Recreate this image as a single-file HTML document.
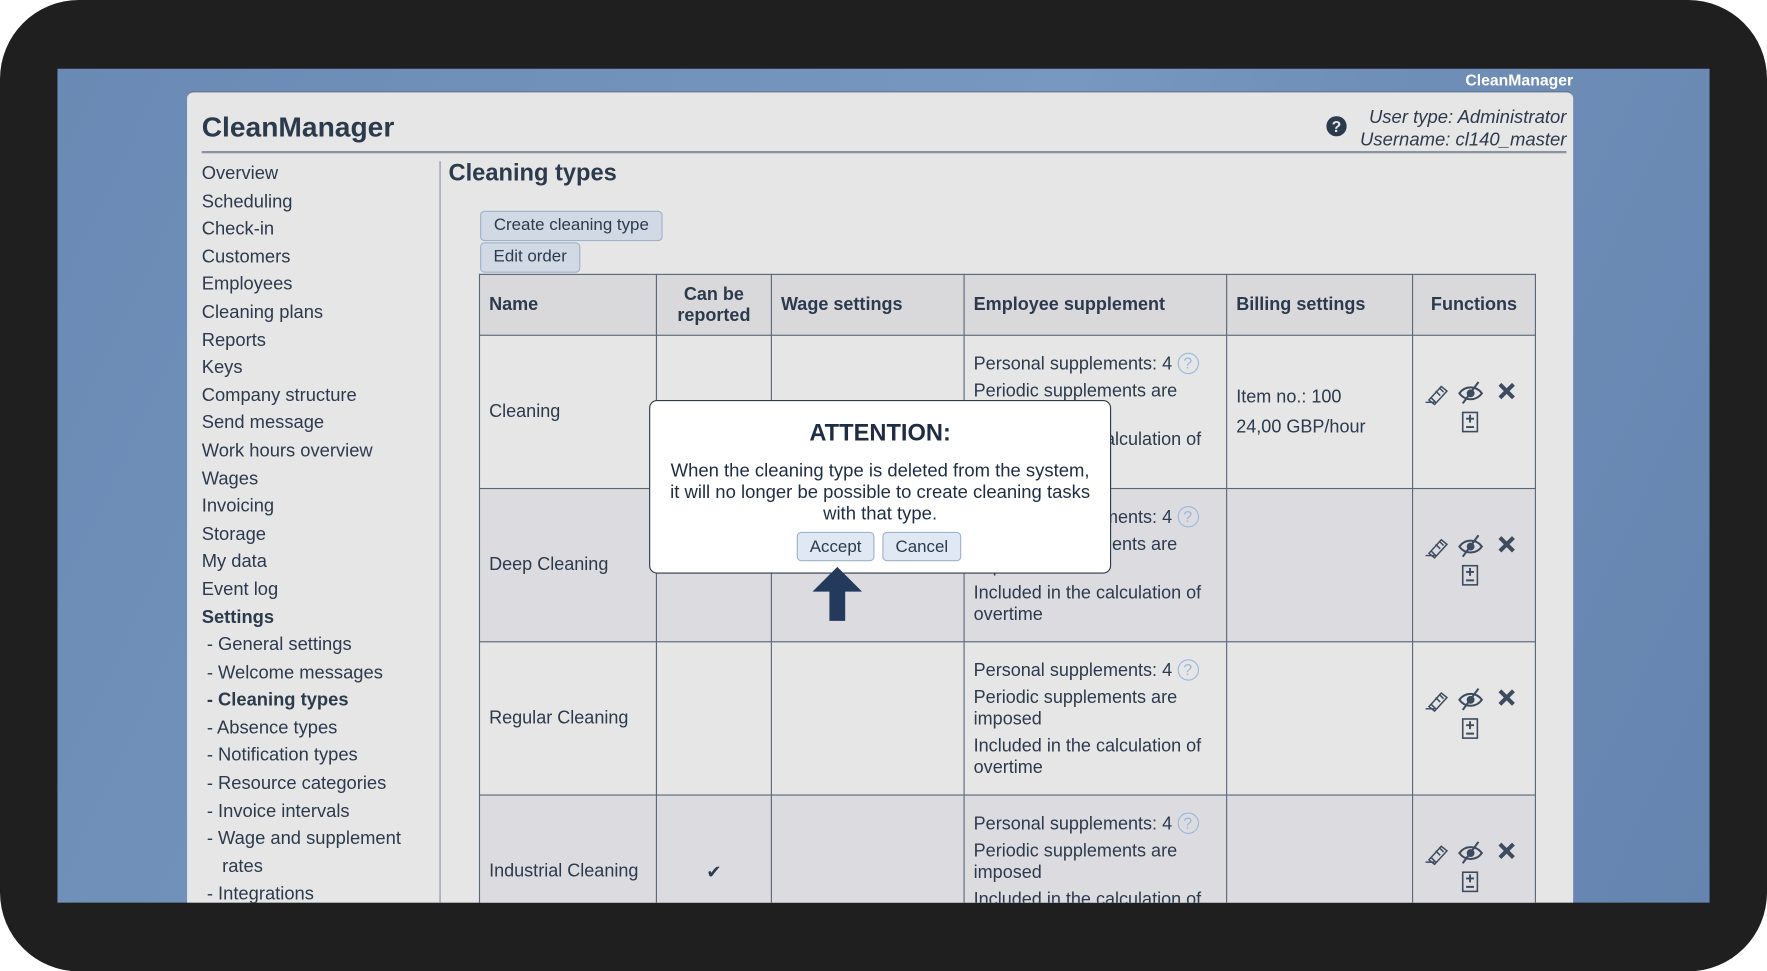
<!DOCTYPE html>
<html><head><meta charset="utf-8"><style>
*{margin:0;padding:0;box-sizing:border-box}
html,body{width:1767px;height:971px;overflow:hidden;background:#fff;font-family:"Liberation Sans",sans-serif}
#w{position:absolute;left:0;top:0;width:1568px;height:862px;transform:scale(1.12691);transform-origin:0 0}
.frame{position:absolute;left:0;top:0;width:1568px;height:862px;background:#201f20;border-radius:70px}
.screen{position:absolute;left:51px;top:61px;width:1466px;height:740px;background:linear-gradient(115deg,#6a89b4 0%,#7898c0 50%,#6f8eb8 65%,#6585b0 100%);overflow:hidden}
.brand{position:absolute;right:121px;top:2px;color:#fff;font-weight:bold;font-size:14px}
.panel{position:absolute;left:115px;top:20px;width:1230px;height:740px;background:#e6e6e6;border-radius:6px 6px 0 0;border-top:1px solid #5d6b80;color:#2c3a4d}
.t{position:absolute;white-space:nowrap}
.nav div{height:24.6px;font-size:16.3px;line-height:24.6px}
table{position:absolute;left:259px;top:161px;border-collapse:collapse;font-size:16px;color:#2c3a4d}
td,th{border:1px solid #5a677a;vertical-align:middle;padding:0 8px;text-align:left}
th{background:#d9d9dc;height:54px;font-weight:bold}
tr.a td{background:#e6e6e6}tr.b td{background:#dcdce0}
td{height:136px}
.btn{position:absolute;background:#d0d9e4;border:1px solid #9fb2c9;border-radius:4px;font-size:15px;color:#2c3a4d;text-align:center;line-height:24px}
.q{display:inline-block;width:19px;height:19px;border:1.5px solid #9ab8dc;border-radius:50%;color:#9ab8dc;font-size:14px;text-align:center;line-height:16px;vertical-align:1px}
.es p{margin:5px 0;line-height:19px}
</style></head><body><div id="w">
<div class="frame"></div>
<div class="screen">
<div class="brand">CleanManager</div>
<div class="panel">
 <div class="t" style="left:13px;top:17px;font-size:25px;font-weight:bold">CleanManager</div>
 <div style="position:absolute;left:13px;top:52px;width:1211px;height:2px;background:#8a93a0"></div>
 <svg style="position:absolute;left:1011px;top:21px" width="18" height="18"><circle cx="9" cy="9" r="9" fill="#2c3a4d"/><text x="9" y="14" font-size="14" font-weight="bold" fill="#e6e6e6" text-anchor="middle" font-family="Liberation Sans">?</text></svg>
 <div class="t" style="right:6px;top:12px;font-size:16.4px;font-style:italic;text-align:right;line-height:20px">User type: Administrator<br>Username: cl140_master</div>
 <div class="nav" style="position:absolute;left:13px;top:60px">
  <div>Overview</div><div>Scheduling</div><div>Check-in</div><div>Customers</div><div>Employees</div><div>Cleaning plans</div><div>Reports</div><div>Keys</div><div>Company structure</div><div>Send message</div><div>Work hours overview</div><div>Wages</div><div>Invoicing</div><div>Storage</div><div>My data</div><div>Event log</div><div style="font-weight:bold">Settings</div>
  <div>&nbsp;- General settings</div><div>&nbsp;- Welcome messages</div><div style="font-weight:bold">&nbsp;- Cleaning types</div><div>&nbsp;- Absence types</div><div>&nbsp;- Notification types</div><div>&nbsp;- Resource categories</div><div>&nbsp;- Invoice intervals</div><div>&nbsp;- Wage and supplement</div><div>&nbsp;&nbsp;&nbsp;&nbsp;rates</div><div>&nbsp;- Integrations</div>
 </div>
 <div style="position:absolute;left:224px;top:61px;width:1px;height:680px;background:#8a93a0"></div>
 <div class="t" style="left:232px;top:60px;font-size:21px;font-weight:bold">Cleaning types</div>
 <div class="btn" style="left:260px;top:105px;width:162px;height:27px">Create cleaning type</div>
 <div class="btn" style="left:260px;top:133px;width:89px;height:27px">Edit order</div>
 <table>
  <tr><th style="width:157px">Name</th><th style="width:102px;text-align:center;line-height:19px">Can be<br>reported</th><th style="width:171px">Wage settings</th><th style="width:233px">Employee supplement</th><th style="width:165px">Billing settings</th><th style="width:109px;text-align:center">Functions</th></tr>
  <tr class="a"><td>Cleaning</td><td></td><td></td><td class="es"><p>Personal supplements: 4 <span class="q">?</span></p><p>Periodic supplements are imposed</p><p>Included in the calculation of overtime</p></td><td style="line-height:27px">Item no.: 100<br>24,00 GBP/hour</td><td class="f"></td></tr>
  <tr class="b"><td>Deep Cleaning</td><td></td><td></td><td class="es"><p>Personal supplements: 4 <span class="q">?</span></p><p>Periodic supplements are imposed</p><p>Included in the calculation of overtime</p></td><td></td><td class="f"></td></tr>
  <tr class="a"><td>Regular Cleaning</td><td></td><td></td><td class="es"><p>Personal supplements: 4 <span class="q">?</span></p><p>Periodic supplements are imposed</p><p>Included in the calculation of overtime</p></td><td></td><td class="f"></td></tr>
  <tr class="b"><td>Industrial Cleaning</td><td style="text-align:center">✔</td><td></td><td class="es"><p>Personal supplements: 4 <span class="q">?</span></p><p>Periodic supplements are imposed</p><p>Included in the calculation of overtime</p></td><td></td><td class="f"></td></tr>
 </table>
</div>
</div>
<svg style="position:absolute;left:0;top:0" width="1568" height="862">
 <defs><g id="ic" fill="none" stroke="#3d4b5e">
  <path d="M0 20h8M3 18l11-12 5 4-11 12z M5 16l4 4M9 10l4 4M12 7l4 4" stroke-width="1.3"/>
  <path d="M30 12c5-7 15-7 20 0c-5 7-15 7-20 0z" stroke-width="1.8"/><circle cx="40" cy="12" r="3" fill="#3d4b5e"/><path d="M33 21l14-19" stroke-width="1.8"/>
  <path d="M66 4l12 12M78 4l-12 12" stroke-width="3.6"/>
  <rect x="33" y="29" width="13" height="17" stroke-width="1.4"/><path d="M39.5 31v7M36 34.5h7M36 42h7" stroke-width="1.7"/>
 </g></defs>
 <use href="#ic" x="1265" y="337"/><use href="#ic" x="1265" y="473"/><use href="#ic" x="1265" y="609"/><use href="#ic" x="1265" y="745"/>
</svg>
<div style="position:absolute;left:576px;top:355px;width:410px;height:154px;background:#fff;border:1.5px solid #2c3a4d;border-radius:7px;text-align:center;color:#1e2d44">
 <div style="margin-top:17px;font-size:21px;font-weight:bold">ATTENTION:</div>
 <div style="margin-top:12px;font-size:16.4px;line-height:19px">When the cleaning type is deleted from the system,<br>it will no longer be possible to create cleaning tasks<br>with that type.</div>
 <div class="btn" style="left:130px;top:116px;width:69px;height:26px;background:#dfe8f3;line-height:25px">Accept</div>
 <div class="btn" style="left:206px;top:116px;width:70px;height:26px;background:#dfe8f3;line-height:25px">Cancel</div>
</div>
<svg style="position:absolute;left:720px;top:502px" width="46" height="50"><path d="M23 1L45 23H30V49H16V23H1z" fill="#233a5c"/></svg>
</div></body></html>
